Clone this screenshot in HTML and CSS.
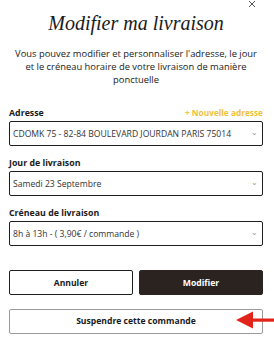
FILE: index.html
```html
<!DOCTYPE html>
<html lang="fr">
<head>
<meta charset="utf-8">
<link rel="stylesheet" href="styles.css">
</head>
<body>
<div class="modal">
  <svg class="close" width="8" height="8" viewBox="0 0 8 8" aria-label="Fermer">
    <path d="M1 1 L7 7 M7 1 L1 7" stroke="#555" stroke-width="1" fill="none"/>
  </svg>
  <h1 class="title">Modifier ma livraison</h1>
  <p class="intro">Vous pouvez modifier et personnaliser l'adresse, le jour et le créneau horaire de votre livraison de manière ponctuelle</p>

  <div class="field field-first">
    <div class="label-row">
      <span class="label">Adresse</span>
      <span class="new-link">+ Nouvelle adresse</span>
    </div>
    <div class="select"><span>CDOMK 75 - 82-84 BOULEVARD JOURDAN PARIS 75014</span><span class="chev">⌄</span></div>
  </div>

  <div class="field">
    <div class="label-row"><span class="label">Jour de livraison</span></div>
    <div class="select"><span>Samedi 23 Septembre</span><span class="chev">⌄</span></div>
  </div>

  <div class="field">
    <div class="label-row"><span class="label">Créneau de livraison</span></div>
    <div class="select"><span>8h à 13h - ( 3,90€ / commande )</span><span class="chev">⌄</span></div>
  </div>

  <div class="actions">
    <button class="btn btn-outline">Annuler</button>
    <button class="btn btn-dark">Modifier</button>
  </div>
  <div class="suspend-row">
    <button class="btn btn-suspend">Suspendre cette commande</button>
    <svg class="arrow" width="38" height="20" viewBox="0 0 38 20" aria-hidden="true">
      <polygon points="0,9 17,0.5 17,17.5" fill="#e2231a"/>
      <rect x="16" y="7.5" width="22" height="3.2" fill="#e2231a"/>
    </svg>
  </div>
</div>
</body>
</html>
```
FILE: styles.css
```css
* { box-sizing: border-box; }
html, body { margin: 0; padding: 0; background: #fff; }
body { font-family: "Open Sans", "Noto Sans", sans-serif; color: #1d1d1d; }
.modal { position: relative; width: 274px; height: 344px; padding: 0 11px 0 9px; overflow: hidden; }
.close { position: absolute; top: 0; left: 248px; }
.title { margin: 0; padding-top: 11px; text-align: center; font-family: "Liberation Serif", serif; font-style: italic; font-weight: normal; font-size: 20px; line-height: 24px; color: #1a1a1a; }
.intro { margin: 12px 0 0; text-align: center; font-size: 9.4px; line-height: 13px; color: #222; padding: 0 4px; }
.field { margin-top: 11px; }
.field-first { margin-top: 21px; }
.label-row { display: flex; justify-content: space-between; align-items: baseline; height: 13px; margin-bottom: 1px; }
.label { font-weight: 700; font-size: 8.8px; color: #1a1a1a; }
.new-link { font-weight: 700; font-size: 8.3px; color: #f0c23c; }
.select { display: flex; align-items: center; justify-content: space-between; height: 25px; border: 1.5px solid #1f1f1f; border-radius: 2px; padding: 0 4px 0 3px; font-size: 8.6px; color: #333; }
.chev { font-size: 8px; color: #999; line-height: 1; margin-top: -4px; }
.actions { display: flex; gap: 6px; margin-top: 24px; }
.btn { font-family: inherit; font-weight: 700; font-size: 8.6px; height: 25px; border-radius: 2px; cursor: pointer; }
.btn-outline { flex: 1; background: #fff; border: 1.5px solid #1f1f1f; color: #1a1a1a; }
.btn-dark { flex: 1; background: #2a2320; border: 1.5px solid #2a2320; color: #fff; }
.suspend-row { position: relative; margin-top: 12px; }
.btn-suspend { width: 100%; background: #fff; border: 1.5px solid #9a9a9a; color: #1a1a1a; }
.arrow { position: absolute; right: -11px; top: 3.5px; }
```
